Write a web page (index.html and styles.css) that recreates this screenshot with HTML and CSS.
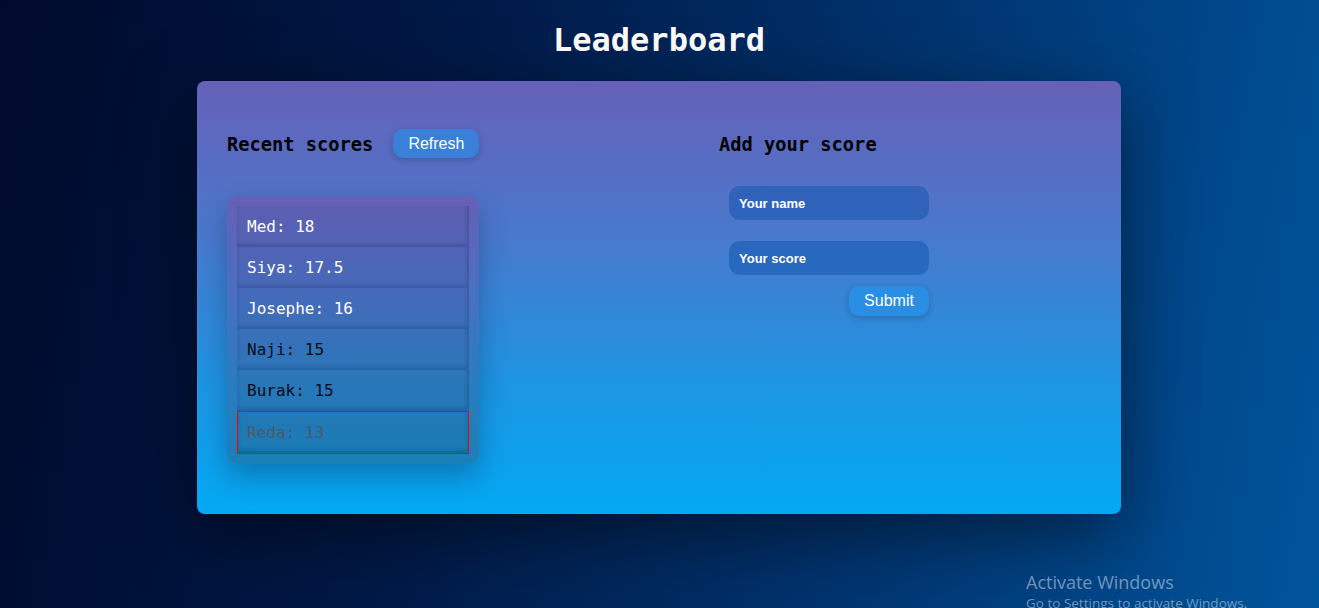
FILE: index.html
```html
<!DOCTYPE html>
<html lang="en">
<head>
<meta charset="utf-8">
<title>Leaderboard</title>
<link rel="stylesheet" href="styles.css">
</head>
<body>
  <h1 class="title">Leaderboard</h1>
  <main class="card">
    <section class="col col-left">
      <div class="col-head">
        <h3 class="col-title">Recent scores</h3>
        <button class="btn btn-refresh" type="button">Refresh</button>
      </div>
      <ul class="scores">
        <li class="score score-light">Med: 18</li>
        <li class="score score-light">Siya: 17.5</li>
        <li class="score score-light">Josephe: 16</li>
        <li class="score score-dark">Naji: 15</li>
        <li class="score score-dark">Burak: 15</li>
        <li class="score score-muted score-flagged">Reda: 13</li>
      </ul>
    </section>
    <section class="col col-right">
      <div class="col-head">
        <h3 class="col-title">Add your score</h3>
      </div>
      <form class="score-form">
        <input class="field" type="text" placeholder="Your name">
        <input class="field" type="text" placeholder="Your score">
        <button class="btn btn-submit" type="button">Submit</button>
      </form>
    </section>
  </main>
  <div class="watermark">
    <div class="wm-title">Activate Windows</div>
    <div class="wm-sub">Go to Settings to activate Windows.</div>
  </div>
</body>
</html>
```

FILE: styles.css
```css
* { box-sizing: border-box; }

html, body {
  margin: 0;
  height: 100%;
}

body {
  font-family: "DejaVu Sans Mono", "Liberation Mono", monospace;
  background: linear-gradient(100deg, #000a2c 0%, #001a48 35%, #00336e 65%, #00549c 100%);
  overflow: hidden;
  position: relative;
  display: flex;
  flex-direction: column;
  padding-right: 1px;
}

.title {
  margin: 0;
  padding-top: 22px;
  height: 81px;
  font-size: 32px;
  line-height: 37px;
  font-weight: bold;
  color: #ffffff;
  text-align: center;
}

.card {
  width: 924px;
  height: 433px;
  margin: 0 auto;
  border-radius: 8px;
  background: linear-gradient(180deg, #6660b8 0%, #4a78cc 35%, #1e95e2 70%, #03a9f4 100%);
  box-shadow: 0 20px 70px rgba(0, 0, 0, 0.5);
  padding: 48px 30px 0 30px;
  display: grid;
  grid-template-columns: 492px 1fr;
  align-items: start;
}

.col-head {
  display: flex;
  align-items: center;
  gap: 20px;
  height: 29px;
}

.col-title {
  margin: 0;
  font-size: 18.72px;
  font-weight: bold;
  color: #000000;
  line-height: 29px;
  position: relative;
  top: 1px;
}

.btn {
  font-family: "Liberation Sans", Arial, sans-serif;
  font-size: 16px;
  color: #ffffff;
  border: none;
  border-radius: 10px;
  cursor: pointer;
  box-shadow: 0 2px 6px rgba(0, 0, 0, 0.2);
}

.btn-refresh {
  width: 86px;
  height: 29px;
  background: #3a80d9;
  padding: 0;
}

.scores {
  list-style: none;
  margin: 38px 0 0 0;
  padding: 10px;
  width: 252px;
  border-radius: 10px;
  background: linear-gradient(180deg, #6560b6 0%, #4a6fc0 35%, #2a7cbf 70%, #1a80b8 100%);
  box-shadow: 0 12px 28px rgba(0, 20, 60, 0.3);
}

.score {
  height: 41px;
  display: flex;
  align-items: center;
  padding: 0 10px;
  font-size: 16px;
  background: rgba(0, 0, 40, 0.04);
  box-shadow: inset 0 -3px 4px rgba(0, 0, 40, 0.16);
  border-right: 2px solid rgba(0, 0, 40, 0.12);
}

.score-light { color: #ffffff; }
.score-dark { color: #0a0a14; }
.score-muted { color: #4b5a68; }

.score-flagged {
  height: 43px;
  border: 1px solid #ff0000;
  padding-left: 9px;
}

.score-form {
  margin: 28px 0 0 10px;
  width: 200px;
  display: flex;
  flex-direction: column;
  align-items: flex-end;
}

.field {
  width: 200px;
  height: 34px;
  border: none;
  border-radius: 11px;
  padding: 0 10px;
  background: rgba(10, 80, 170, 0.45);
  font-family: "Liberation Sans", Arial, sans-serif;
  font-size: 13px;
  color: #ffffff;
  outline: none;
  margin-bottom: 21px;
}

.field + .field { margin-bottom: 11px; }

.field::placeholder {
  color: #ffffff;
  opacity: 1;
  font-weight: 600;
}

.btn-submit {
  width: 80px;
  height: 30px;
  padding: 0;
  background: #2a8fe4;
}

.watermark {
  position: absolute;
  left: 1026px;
  top: 570px;
  font-family: "Open Sans", "Noto Sans", sans-serif;
  color: rgba(255, 255, 255, 0.45);
  white-space: nowrap;
}

.wm-title {
  font-size: 18px;
  line-height: 24px;
}

.wm-sub {
  font-size: 13.5px;
  line-height: 18px;
}
```
